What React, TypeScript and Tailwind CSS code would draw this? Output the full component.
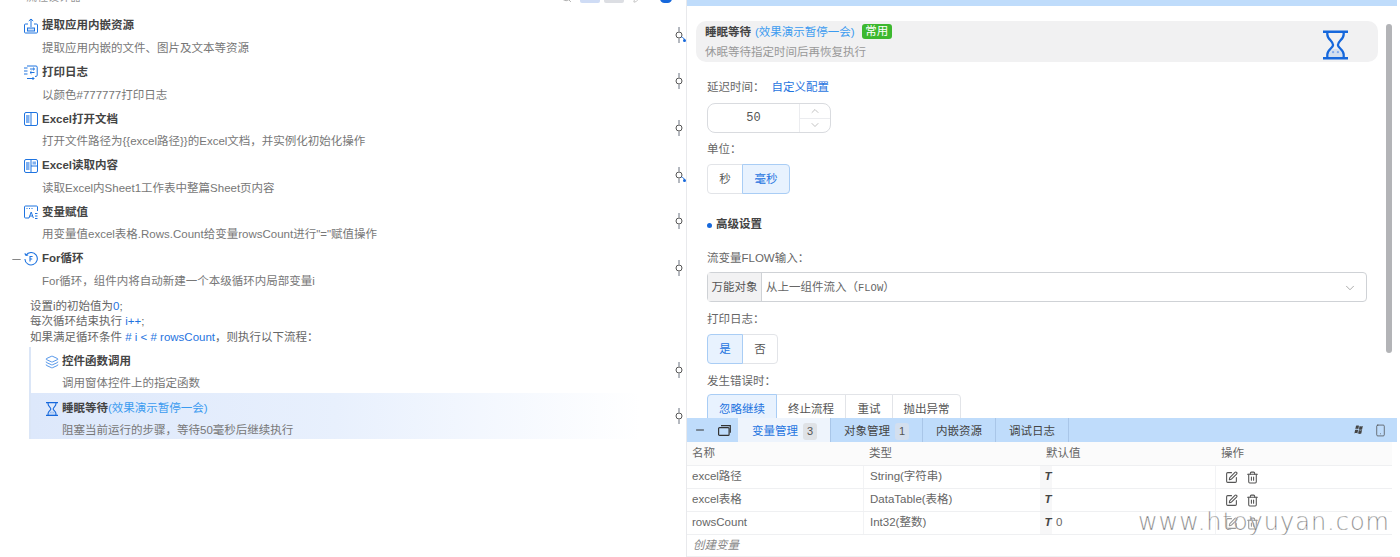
import { Layers, Minus, Pencil, Smartphone, SquarePen, Trash2, ChevronDown, ChevronUp, Search } from "lucide-react";

const font = "font-['Liberation_Sans','Noto_Sans_CJK_SC',sans-serif]";

const NodeDot = ({ arrow = false }: { arrow?: boolean }) => (
    <svg width="14" height="18" viewBox="0 0 14 18" fill="none" className="block">
        <path d="M5 1v4.5M5 12.5V17" stroke="#6b7280" strokeWidth="1" />
        <circle cx="5" cy="9" r="3" stroke="#555" strokeWidth="1" fill="#fff" />
        {arrow && <path d="M7.5 11c1.5.5 3 1.5 3 3" stroke="#1668dc" strokeWidth="1" />}
        {arrow && <circle cx="10.5" cy="14.5" r="1.5" fill="#1668dc" />}
    </svg>
);

const Glass = ({ w, h }: { w: number; h: number }) => (
    <svg width={w} height={h} viewBox="0 0 26 30" fill="none" stroke="#1668dc" strokeWidth="2.4">
        <path d="M0 1.2h26M0 28.8h26" />
        <path d="M4.5 1v3c0 5 6 7 6 11 0 3-6 5-6 10v4M21.5 1v3c0 5-6 7-6 11 0 3 6 5 6 10v4" />
        <path d="M6 28v-3c0-3 4-6 7-6s7 3 7 6v3z" fill="#1668dc" fillOpacity="0.14" stroke="none" />
        <circle cx="10.5" cy="22.5" r="1.2" fill="#7ea9ee" stroke="none" />
        <circle cx="15.5" cy="22.5" r="1.2" fill="#7ea9ee" stroke="none" />
    </svg>
);

const StepIcon = ({ kind }: { kind: string }) => {
    const blue = "#1f74e0";
    if (kind === "extract") {
        return (
            <svg width="14" height="16" viewBox="0 0 14 16" fill="none" stroke={blue} strokeWidth="1">
                <path d="M4 6H1.5a1 1 0 0 0-1 1v7a1 1 0 0 0 1 1h11a1 1 0 0 0 1-1V7a1 1 0 0 0-1-1H10" />
                <path d="M7 9V1M4.8 3 7 1l2.2 2" />
                <rect x="3.5" y="10" width="7" height="3" fill="#cfe2fb" />
            </svg>
        );
    }
    if (kind === "log") {
        return (
            <svg width="14" height="15" viewBox="0 0 14 15" fill="none" stroke={blue} strokeWidth="1">
                <path d="M3 1h9a1.2 1.2 0 0 1 1.2 1.2v8A1.2 1.2 0 0 1 12 11.4h-1" />
                <path d="M0 3h3.5M0 6h3.5M0 9h3.5" />
                <path d="M6 4h4.5M9 2.6 10.5 4 9 5.4M10.5 7.5H6M7.5 6.1 6 7.5l1.5 1.4" />
                <path d="M3 13.5h7M8.5 12l1.5 1.5L8.5 15" />
            </svg>
        );
    }
    if (kind === "open") {
        return (
            <svg width="14" height="14" viewBox="0 0 14 14" fill="none" stroke={blue} strokeWidth="1">
                <rect x="0.5" y="0.5" width="13" height="13" rx="1.5" />
                <path d="M7 .5v13" />
                <rect x="2" y="3" width="3.5" height="8" fill="#7fb0f0" stroke="none" />
            </svg>
        );
    }
    if (kind === "read") {
        return (
            <svg width="14" height="14" viewBox="0 0 14 14" fill="none" stroke={blue} strokeWidth="1">
                <rect x="0.5" y="0.5" width="13" height="13" rx="1.5" />
                <path d="M7 .5v13M7 7h6.5" />
                <rect x="2" y="3" width="3.5" height="8" fill="#7fb0f0" stroke="none" />
                <rect x="8.5" y="2.5" width="3.5" height="3" fill="#7fb0f0" stroke="none" />
            </svg>
        );
    }
    if (kind === "assign") {
        return (
            <svg width="14" height="14" viewBox="0 0 14 14" fill="none" stroke={blue} strokeWidth="1">
                <path d="M5 13H1.5a1 1 0 0 1-1-1V2a1 1 0 0 1 1-1h11a1 1 0 0 1 1 1v4" />
                <path d="M2.5 3.5h1M5 3.5h1M7.5 3.5h1" />
                <path d="M5 13l2.2-6L9.4 13M5.8 11h2.8M11 8.5h2.5M11 11h2.5M11 13.5h2.5" />
            </svg>
        );
    }
    return (
        <svg width="14" height="14" viewBox="0 0 14 14" fill="none" stroke={blue} strokeWidth="1.1">
            <path d="M2 3.2A6.2 6.2 0 1 1 .9 7" />
            <path d="M.8 1.4 2 3.4l2.2-.4" />
            <path d="M8.6 4.5H6v5M6 7h2.2" />
        </svg>
    );
};

const Step = ({ icon, title, desc }: { icon: string; title: string; desc: string }) => (
    <div className="h-[46.6px] pl-[24px]">
        <div className="flex h-[24px] items-center gap-[4px]">
            <div className="flex w-[14px] justify-center"><StepIcon kind={icon} /></div>
            <span className="text-[11.5px] font-semibold text-[#444]">{title}</span>
        </div>
        <div className="pl-[18px] text-[11.5px] leading-[20px] text-[#777]">{desc}</div>
    </div>
);

const Seg = ({ items, active, widths }: { items: string[]; active: number; widths: string[] }) => (
    <div className="flex h-[30px]">
        {items.map((t, i) => (
            <div
                key={t}
                className={`flex items-center justify-center border pt-[2px] text-[11.5px] ${widths[i]} ${i > 0 ? "ml-[-1px]" : ""} ${i === 0 ? "rounded-l-[4px]" : ""} ${i === items.length - 1 ? "rounded-r-[4px]" : ""} ${i === active ? "z-10 border-[#a9cdf5] bg-[#e8f2fe] text-[#1f74e0]" : "border-[#e2e4e8] bg-white text-[#555]"}`}
            >
                {t}
            </div>
        ))}
    </div>
);

const Label = ({ children }: { children: React.ReactNode }) => (
    <div className="text-[11.5px] leading-[18px] text-[#666]">{children}</div>
);

const Row = ({ name, type, val, last }: { name: string; type: string; val?: string; last?: boolean }) => (
    <div className="flex h-[23px] items-center border-b border-[#eff0f2] text-[11.5px] text-[#666]">
        <div className="w-[176px] pl-[5px]">{name}</div>
        <div className="flex h-full w-[177px] items-center border-l border-[#f2f3f5] pl-[6px]">{type}</div>
        <div className="flex h-full w-[175px] items-center gap-[4px]">
            <span className="flex h-full w-[12px] items-center justify-center bg-[#f7f7f8] pl-[4px] text-[11.5px] font-bold italic text-[#444]">T</span>
            <span>{val}</span>
        </div>
        <div className="flex h-full flex-1 items-center gap-[8px] border-l border-[#f2f3f5] pl-[9px] text-[#555]">
            <SquarePen size={13} className={last ? "opacity-60" : ""} />
            <Trash2 size={13} className={last ? "opacity-60" : ""} />
        </div>
    </div>
);

const App = () => {
    return (
        <div className={`relative flex h-[557px] w-[1400px] overflow-hidden bg-white ${font}`}>
            {/* left: flow list */}
            <div className="relative h-full w-[687px] shrink-0 border-r border-[#e8e9ec]">
                <div className="flex h-[2px] items-start justify-between overflow-visible pl-[26px] pr-[14px]">
                    <span className="mt-[-9px] text-[11px] leading-[12px] text-[#999]">流程设计器</span>
                    <div className="flex items-start">
                        <Search size={11} className="mt-[-8px] text-[#aaa]" />
                        <span className="ml-[8px] mt-[-3px] h-[6px] w-[20px] rounded-[2px] bg-[#cfdcf5]" />
                        <span className="ml-[4px] mt-[-3px] h-[6px] w-[20px] rounded-[2px] bg-[#dcdee3]" />
                        <Pencil size={10} className="ml-[9px] mt-[-7px] text-[#bbb]" />
                        <span className="ml-[17px] mt-[-6px] h-[9px] w-[12px] rounded-full bg-[#1668dc]" />
                    </div>
                </div>

                <div className="pt-[12px]">
                    <Step icon="extract" title="提取应用内嵌资源" desc="提取应用内嵌的文件、图片及文本等资源" />
                    <Step icon="log" title="打印日志" desc="以颜色#777777打印日志" />
                    <Step icon="open" title="Excel打开文档" desc="打开文件路径为{{excel路径}}的Excel文档，并实例化初始化操作" />
                    <Step icon="read" title="Excel读取内容" desc="读取Excel内Sheet1工作表中整篇Sheet页内容" />
                    <Step icon="assign" title="变量赋值" desc='用变量值excel表格.Rows.Count给变量rowsCount进行"="赋值操作' />
                    <div className="relative">
                        <Minus size={13} strokeWidth={1.2} className="absolute left-[10px] top-[6px] text-[#444]" />
                        <Step icon="for" title="For循环" desc="For循环，组件内将自动新建一个本级循环内局部变量i" />
                    </div>
                </div>

                <div className="pl-[30px] pt-[5px] text-[11.5px] leading-[15.5px] text-[#666]">
                    <div>设置i的初始值为<span className="text-[#1f74e0]">0</span>;</div>
                    <div>每次循环结束执行 <span className="text-[#1f74e0]">i++</span>;</div>
                    <div>如果满足循环条件 <span className="text-[#1f74e0]"># i &lt; # rowsCount</span>，则执行以下流程：</div>
                </div>

                <div className="ml-[29px] mt-[2px] border-l-2 border-[#dbe6f7]">
                    <div className="h-[46px] pl-[14px] pt-[3px]">
                        <div className="flex h-[24px] items-center gap-[3px]">
                            <Layers size={14} strokeWidth={1.3} className="text-[#1f74e0]" />
                            <span className="text-[11.5px] font-semibold text-[#444]">控件函数调用</span>
                        </div>
                        <div className="mt-[-1px] pl-[17px] text-[11.5px] leading-[20px] text-[#777]">调用窗体控件上的指定函数</div>
                    </div>
                    <div className="mr-[46px] h-[46px] bg-gradient-to-r from-[#dde8fb] via-[#e8f0fd] to-white pl-[14px] pt-[4px]">
                        <div className="flex h-[24px] items-center gap-[4px]">
                            <div className="flex w-[13px] justify-center"><Glass w={12} h={14} /></div>
                            <span className="text-[11.5px] font-semibold text-[#444]">睡眠等待<span className="font-normal text-[#3b9bf0]">(效果演示暂停一会)</span></span>
                        </div>
                        <div className="mt-[-1px] pl-[17px] text-[11.5px] leading-[20px] text-[#777]">阻塞当前运行的步骤，等待50毫秒后继续执行</div>
                    </div>
                </div>

                {/* connector marks along the panel edge */}
                <div className="absolute right-[-2px] top-[26px]"><NodeDot arrow /></div>
                <div className="absolute right-[-2px] top-[72px]"><NodeDot /></div>
                <div className="absolute right-[-2px] top-[119px]"><NodeDot /></div>
                <div className="absolute right-[-2px] top-[166px]"><NodeDot arrow /></div>
                <div className="absolute right-[-2px] top-[212px]"><NodeDot /></div>
                <div className="absolute right-[-2px] top-[259px]"><NodeDot /></div>
                <div className="absolute right-[-2px] top-[361px]"><NodeDot /></div>
                <div className="absolute right-[-2px] top-[407px]"><NodeDot /></div>
            </div>

            {/* right: properties + bottom panel */}
            <div className="flex h-full min-w-0 flex-1 flex-col">
                <div className="mr-[3px] h-[6px] shrink-0 bg-[#bfdcfb]" />
                <div className="relative min-h-0 flex-1 overflow-hidden pl-[9px] pr-[22px] pt-[15px]">
                    <div className="flex h-[41px] items-center justify-between rounded-[10px] bg-[#f1f1f2] pl-[9px] pr-[30px]">
                        <div className="pt-[1px]">
                            <div className="flex h-[18px] items-center gap-[4px] text-[11.5px]">
                                <span className="font-semibold text-[#444]">睡眠等待</span>
                                <span className="text-[#3b9bf0]">(效果演示暂停一会)</span>
                                <span className="ml-[3px] mt-[-2px] flex h-[15px] w-[30px] items-center justify-center rounded-[3px] bg-[#3cb82f] text-[11.5px] text-white">常用</span>
                            </div>
                            <div className="mt-[1px] text-[11.5px] leading-[18px] text-[#999]">休眠等待指定时间后再恢复执行</div>
                        </div>
                        <div className="mt-[6px]"><Glass w={25} h={30} /></div>
                    </div>

                    <div className="pl-[11px]">
                        <div className="mt-[17px] flex h-[18px] items-center text-[11.5px] text-[#666]">
                            延迟时间：<span className="ml-[7px] text-[#1f74e0]">自定义配置</span>
                        </div>
                        <div className="mt-[6px] flex h-[30px] w-[124px] rounded-[8px] border border-[#d9dbdf]">
                            <div className="flex flex-1 items-center justify-center font-['Liberation_Mono',monospace] text-[12px] text-[#555]">50</div>
                            <div className="flex w-[31px] flex-col border-l border-[#ebecef] text-[#999]">
                                <div className="flex flex-1 items-center justify-center border-b border-[#ebecef]"><ChevronUp size={12} strokeWidth={1.2} /></div>
                                <div className="flex flex-1 items-center justify-center"><ChevronDown size={12} strokeWidth={1.2} /></div>
                            </div>
                        </div>
                        <div className="mt-[7px]"><Label>单位：</Label></div>
                        <div className="mt-[6px]"><Seg items={["秒", "毫秒"]} active={1} widths={["w-[36px]", "w-[48px]"]} /></div>

                        <div className="mt-[22px] flex h-[18px] items-center gap-[4px] text-[11.5px] font-semibold text-[#444]">
                            <span className="h-[5px] w-[5px] rounded-full bg-[#1668dc]" />
                            高级设置
                        </div>

                        <div className="mt-[15px]"><Label>流变量FLOW输入：</Label></div>
                        <div className="mt-[5px] flex h-[30px] w-[660px] rounded-[4px] border border-[#cfd2d6]">
                            <div className="flex w-[54px] items-center justify-center border-r border-[#cfd2d6] bg-[#f2f2f3] pt-[1px] text-[11.5px] text-[#555]">万能对象</div>
                            <div className="flex flex-1 items-center justify-between pl-[4px] pr-[9px] pt-[1px] text-[11.5px] text-[#666]">
                                <span>从上一组件流入（<span className="font-['Liberation_Mono',monospace] text-[10.5px]">FLOW</span>）</span>
                                <ChevronDown size={14} strokeWidth={1.2} className="text-[#888]" />
                            </div>
                        </div>
                        <div className="mt-[8px]"><Label>打印日志：</Label></div>
                        <div className="mt-[6px]"><Seg items={["是", "否"]} active={0} widths={["w-[36px]", "w-[36px]"]} /></div>
                        <div className="mt-[8px]"><Label>发生错误时：</Label></div>
                        <div className="mt-[4px]"><Seg items={["忽略继续", "终止流程", "重试", "抛出异常"]} active={0} widths={["w-[70px]", "w-[70px]", "w-[48px]", "w-[69px]"]} /></div>
                    </div>

                    <div className="absolute right-[8px] top-[18px] h-[329px] w-[6px] rounded-full bg-[#b3b4b7]" />
                </div>

                <div className="h-[139px] shrink-0 pr-[3px]">
                    <div className="flex h-[24px] items-center bg-[#bfdcfb]">
                        <div className="flex w-[51px] items-center gap-[12px] pl-[7px] text-[#333]">
                            <Minus size={12} />
                            <svg width="13" height="11" viewBox="0 0 13 11" fill="none" stroke="#333" strokeWidth="1.2"><rect x="0.6" y="2.6" width="10.5" height="7.8" rx="1" /><path d="M3 .7h9.3v7" /></svg>
                        </div>
                        <div className="flex h-full w-[92px] items-center gap-[5px] bg-[#eef4fc] pl-[14px] pt-[3px] text-[11.5px] text-[#1f74e0]">
                            变量管理<span className="rounded-[3px] bg-[#dfe2e6] px-[4px] text-[11px] text-[#555]">3</span>
                        </div>
                        <div className="flex h-full w-[92px] items-center gap-[5px] border-l border-[#a9c6e8] pl-[13px] pt-[3px] text-[11.5px] text-[#444]">
                            对象管理<span className="rounded-[3px] bg-[#d3dfee] px-[4px] text-[11px] text-[#555]">1</span>
                        </div>
                        <div className="flex h-full w-[73px] items-center justify-center border-l border-[#a9c6e8] pt-[3px] text-[11.5px] text-[#444]">内嵌资源</div>
                        <div className="flex h-full w-[74px] items-center justify-center border-l border-r border-[#a9c6e8] pt-[3px] text-[11.5px] text-[#444]">调试日志</div>
                        <div className="ml-auto flex items-center gap-[9px] pr-[10px] text-[#444]">
                            <svg width="11" height="10" viewBox="0 0 11 10" fill="#444">
                                <path d="M2 .8c1-.5 2-.5 3 0l-.7 3.4c-1-.5-2-.5-3 0zM5.6 1c1 .5 2 .5 3.2 0l-.7 3.4c-1 .5-2.2.5-3.2 0zM1.1 5c1-.5 2-.5 3 0l-.7 3.4c-1-.5-2-.5-3 0zM4.8 5.1c1 .5 2.1.5 3.2 0l-.7 3.4c-1 .5-2.2.5-3.2 0z" />
                            </svg>
                            <Smartphone size={13} strokeWidth={1.3} />
                        </div>
                    </div>
                    <div className="mr-[5px]">
                        <div className="flex h-[24px] items-center border-b border-[#eff0f2] bg-[#fbfbfb] pt-[1px] text-[11.5px] text-[#666]">
                            <div className="w-[176px] pl-[5px]">名称</div>
                            <div className="w-[177px] pl-[6px]">类型</div>
                            <div className="w-[175px] pl-[6px]">默认值</div>
                            <div className="flex-1 pl-[6px]">操作</div>
                        </div>
                        <Row name="excel路径" type="String(字符串)" />
                        <Row name="excel表格" type="DataTable(表格)" />
                        <Row name="rowsCount" type="Int32(整数)" val="0" last />
                        <div className="flex h-[22px] items-center border-b border-[#eff0f2] pl-[6px] text-[11.5px] italic text-[#888]">创建变量</div>
                    </div>
                </div>
            </div>

            {/* watermark over the table */}
            <div className="absolute bottom-[20px] right-[10px] font-['DejaVu_Sans',sans-serif] text-[24px] font-light leading-[30px] tracking-[1px] text-[#666] [-webkit-text-stroke:0.3px_#fff]">www.htoyuyan.com</div>
        </div>
    );
};

export default App;
